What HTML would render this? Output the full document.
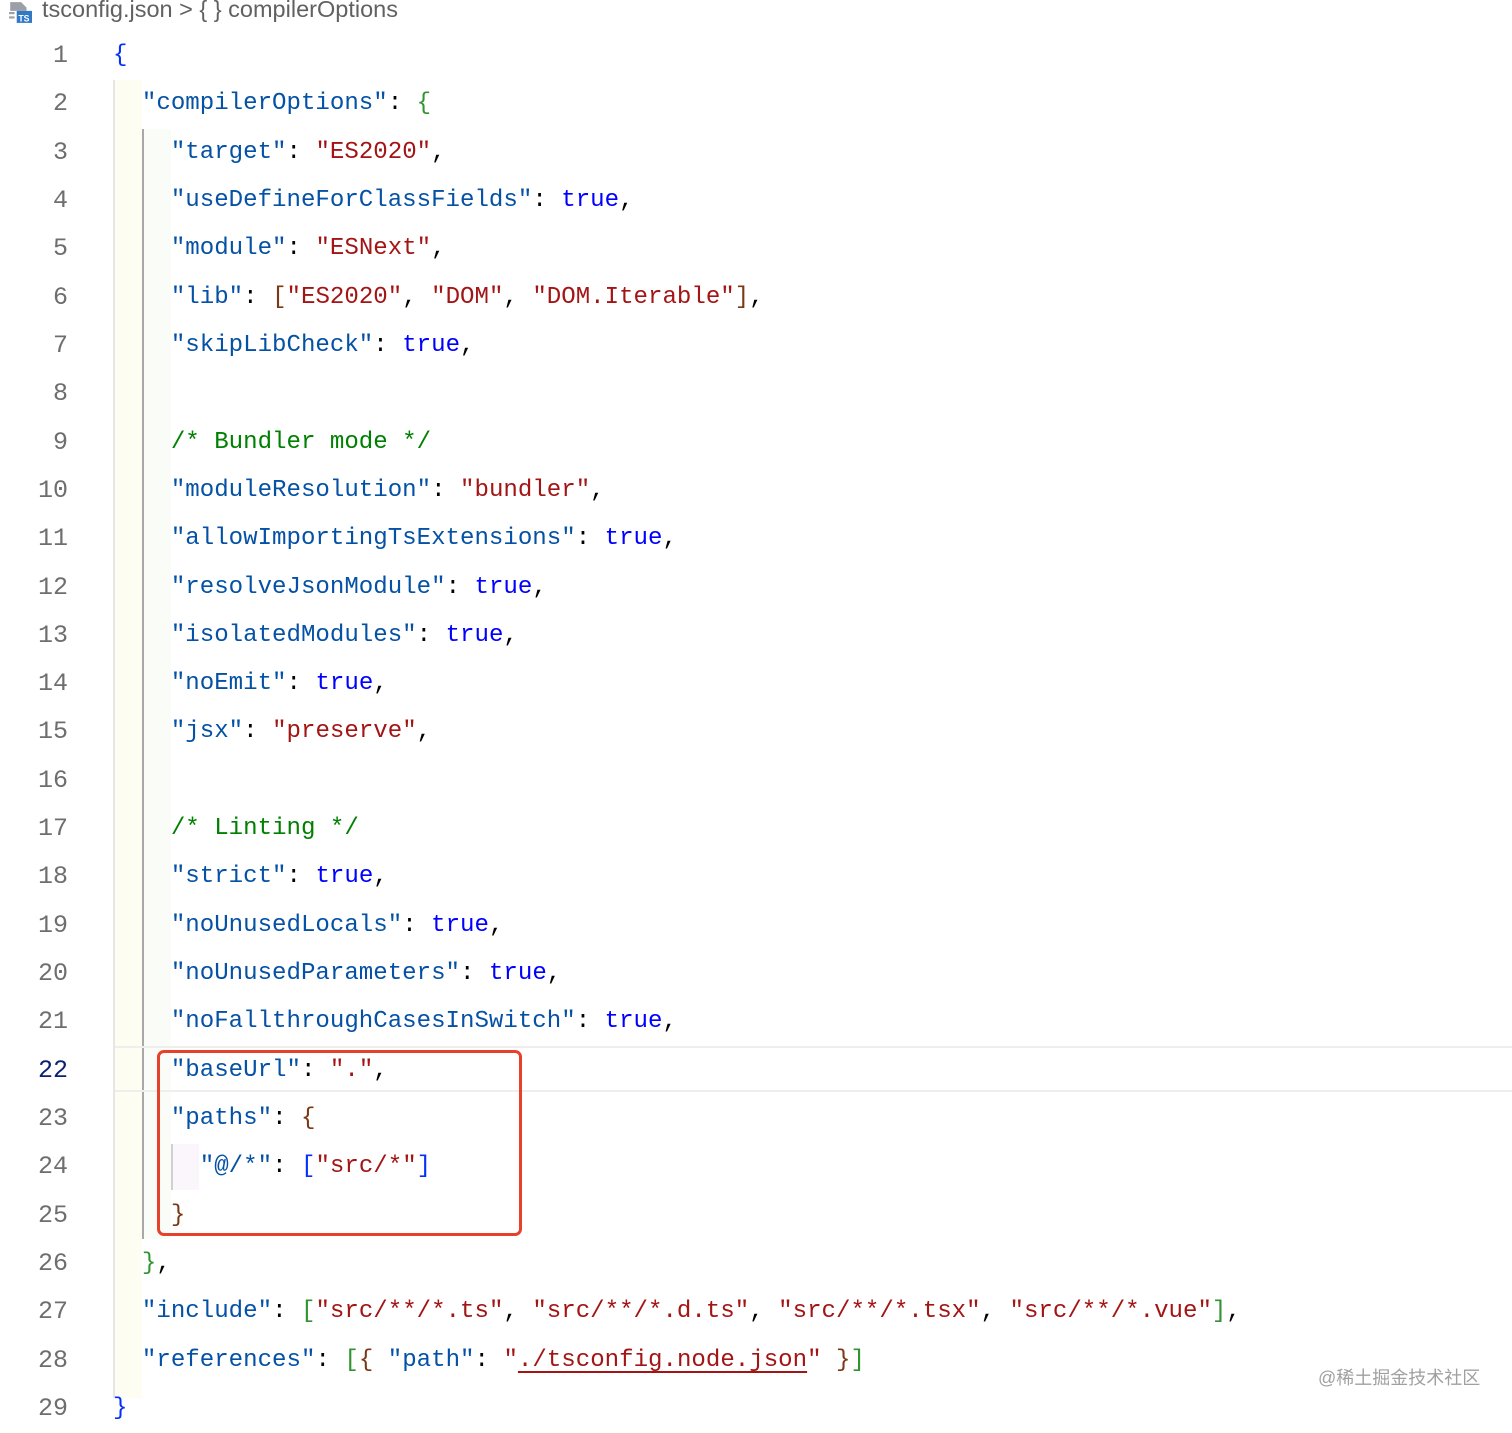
<!DOCTYPE html>
<html><head><meta charset="utf-8"><style>
body{margin:0;width:1512px;height:1421px;background:#fff;position:relative;overflow:hidden;font-family:"Liberation Mono",monospace;}
.bc{position:absolute;left:42px;top:-4px;font-family:"Liberation Sans",sans-serif;font-size:23.5px;color:#616161;white-space:pre;}
.ic{position:absolute;left:8px;top:1px;width:24px;height:22px;}
.ln{position:absolute;left:0;width:68px;text-align:right;font-size:25px;color:#6e6e6e;line-height:48px;}
.cl{position:absolute;left:113px;font-size:24.1px;line-height:48px;white-space:pre;color:#000;}
.k{color:#0451a5}.s{color:#a31515}.b{color:#0000ff}.c{color:#008000}
.p1{color:#0431fa}.p2{color:#319331}.p3{color:#7b3814}
</style></head><body>
<svg class="ic" viewBox="0 0 22 20"><path d="M2 1h10l5 5v3H2z" fill="#9aa0a6"/><rect x="8" y="9" width="14" height="11" fill="#3178c6"/><text x="9.5" y="18.5" font-family="Liberation Sans" font-size="8" font-weight="bold" fill="#fff">TS</text><rect x="1" y="10" width="5" height="2" fill="#9aa0a6"/><rect x="1" y="14" width="5" height="2" fill="#9aa0a6"/></svg>
<div class="bc">tsconfig.json &gt; { } compilerOptions</div>
<div style="position:absolute;left:114px;top:80px;width:28px;height:1318px;background:#fdfdf1"></div>
<div style="position:absolute;left:113px;top:80px;width:2px;height:1318px;background:#e6e6e6"></div>
<div style="position:absolute;left:143px;top:129px;width:28px;height:1110px;background:#f9fcf7"></div>
<div style="position:absolute;left:142px;top:129px;width:2px;height:1110px;background:#a8a8a8"></div>
<div style="position:absolute;left:171px;top:1144px;width:28px;height:46px;background:#fbf6fb"></div>
<div style="position:absolute;left:171px;top:1144px;width:2px;height:46px;background:#d0d0d0"></div>
<div style="position:absolute;left:115px;top:1046px;width:1397px;height:42px;border-top:2px solid #eeeeee;border-bottom:2px solid #eeeeee"></div>
<div id="lines"></div>
<div style="position:absolute;left:157px;top:1050px;width:359px;height:180px;border:3px solid #e8412b;border-radius:7px"></div>
<div style="position:absolute;left:1318px;top:1364px;font-family:'Liberation Sans','Noto Sans CJK SC',sans-serif;font-size:18px;color:#a0a0a0">@稀土掘金技术社区</div>
<script>
const L=[
'<span class="p1">{</span>',
'  <span class="k">"compilerOptions"</span>: <span class="p2">{</span>',
'    <span class="k">"target"</span>: <span class="s">"ES2020"</span>,',
'    <span class="k">"useDefineForClassFields"</span>: <span class="b">true</span>,',
'    <span class="k">"module"</span>: <span class="s">"ESNext"</span>,',
'    <span class="k">"lib"</span>: <span class="p3">[</span><span class="s">"ES2020"</span>, <span class="s">"DOM"</span>, <span class="s">"DOM.Iterable"</span><span class="p3">]</span>,',
'    <span class="k">"skipLibCheck"</span>: <span class="b">true</span>,',
'',
'    <span class="c">/* Bundler mode */</span>',
'    <span class="k">"moduleResolution"</span>: <span class="s">"bundler"</span>,',
'    <span class="k">"allowImportingTsExtensions"</span>: <span class="b">true</span>,',
'    <span class="k">"resolveJsonModule"</span>: <span class="b">true</span>,',
'    <span class="k">"isolatedModules"</span>: <span class="b">true</span>,',
'    <span class="k">"noEmit"</span>: <span class="b">true</span>,',
'    <span class="k">"jsx"</span>: <span class="s">"preserve"</span>,',
'',
'    <span class="c">/* Linting */</span>',
'    <span class="k">"strict"</span>: <span class="b">true</span>,',
'    <span class="k">"noUnusedLocals"</span>: <span class="b">true</span>,',
'    <span class="k">"noUnusedParameters"</span>: <span class="b">true</span>,',
'    <span class="k">"noFallthroughCasesInSwitch"</span>: <span class="b">true</span>,',
'    <span class="k">"baseUrl"</span>: <span class="s">"."</span>,',
'    <span class="k">"paths"</span>: <span class="p3">{</span>',
'      <span class="k">"@/*"</span>: <span class="p1">[</span><span class="s">"src/*"</span><span class="p1">]</span>',
'    <span class="p3">}</span>',
'  <span class="p2">}</span>,',
'  <span class="k">"include"</span>: <span class="p2">[</span><span class="s">"src/**/*.ts"</span>, <span class="s">"src/**/*.d.ts"</span>, <span class="s">"src/**/*.tsx"</span>, <span class="s">"src/**/*.vue"</span><span class="p2">]</span>,',
'  <span class="k">"references"</span>: <span class="p2">[</span><span class="p3">{</span> <span class="k">"path"</span>: <span class="s">"<span style="text-decoration:underline;text-underline-offset:5px">./tsconfig.node.json</span>"</span> <span class="p3">}</span><span class="p2">]</span>',
'<span class="p1">}</span>'];
let h='';
L.forEach((t,i)=>{const y=Math.round(32+i*48.32);
h+=`<div class="ln" style="top:${y}px;${i==21?'color:#0b216f':''}">${i+1}</div><div class="cl" style="top:${y}px">${t}</div>`;});
document.getElementById('lines').innerHTML=h;
</script>
</body></html>
